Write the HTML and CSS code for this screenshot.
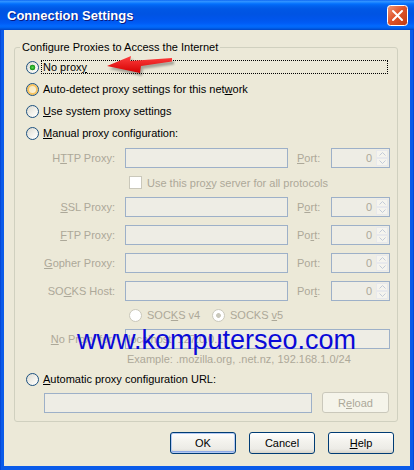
FILE: index.html
```html
<!DOCTYPE html>
<html>
<head>
<meta charset="utf-8">
<link rel="stylesheet" href="styles.css">
</head>
<body>
<div class="window">
  <div class="titlebar">
    <span class="title">Connection Settings</span>
    <svg class="close" width="21" height="21" viewBox="0 0 21 21">
      <defs>
        <linearGradient id="cg" x1="0" y1="0" x2="1" y2="1">
          <stop offset="0" stop-color="#F09A7A"/>
          <stop offset="0.45" stop-color="#E0552C"/>
          <stop offset="1" stop-color="#C0390E"/>
        </linearGradient>
      </defs>
      <rect x="0.5" y="0.5" width="20" height="20" rx="3" fill="url(#cg)" stroke="#FFFFFF"/>
      <path d="M6 6 L15 15 M15 6 L6 15" stroke="#FFFFFF" stroke-width="2" stroke-linecap="round"/>
    </svg>
  </div>
  <div class="client">
    <fieldset class="group">
      <legend>Configure Proxies to Access the Internet</legend>
      <div class="rrow"><span class="radio checked"></span><span class="lbl focus">No prox<u>y</u></span></div>
      <div class="rrow"><span class="radio hover"></span><span class="lbl">Auto-detect proxy settings for this net<u>w</u>ork</span></div>
      <div class="rrow"><span class="radio"></span><span class="lbl"><u>U</u>se system proxy settings</span></div>
      <div class="rrow"><span class="radio"></span><span class="lbl"><u>M</u>anual proxy configuration:</span></div>

      <div class="frow first"><span class="flabel">H<u>T</u>TP Proxy:</span><span class="input"></span><span class="plabel"><u>P</u>ort:</span><span class="spin"><span class="val">0</span><span class="arrows"><span class="ab"><svg width="7" height="4" viewBox="0 0 7 4"><path d="M0.5 3.5 L3.5 0.5 L6.5 3.5" fill="none" stroke="#C3CBD8"/></svg></span><span class="ab"><svg width="7" height="4" viewBox="0 0 7 4"><path d="M0.5 0.5 L3.5 3.5 L6.5 0.5" fill="none" stroke="#C3CBD8"/></svg></span></span></span></div>
      <div class="crow"><span class="check"></span><span class="dis">Use this pro<u>x</u>y server for all protocols</span></div>
      <div class="frow"><span class="flabel"><u>S</u>SL Proxy:</span><span class="input"></span><span class="plabel">P<u>o</u>rt:</span><span class="spin"><span class="val">0</span><span class="arrows"><span class="ab"><svg width="7" height="4" viewBox="0 0 7 4"><path d="M0.5 3.5 L3.5 0.5 L6.5 3.5" fill="none" stroke="#C3CBD8"/></svg></span><span class="ab"><svg width="7" height="4" viewBox="0 0 7 4"><path d="M0.5 0.5 L3.5 3.5 L6.5 0.5" fill="none" stroke="#C3CBD8"/></svg></span></span></span></div>
      <div class="frow gap"><span class="flabel"><u>F</u>TP Proxy:</span><span class="input"></span><span class="plabel">Po<u>r</u>t:</span><span class="spin"><span class="val">0</span><span class="arrows"><span class="ab"><svg width="7" height="4" viewBox="0 0 7 4"><path d="M0.5 3.5 L3.5 0.5 L6.5 3.5" fill="none" stroke="#C3CBD8"/></svg></span><span class="ab"><svg width="7" height="4" viewBox="0 0 7 4"><path d="M0.5 0.5 L3.5 3.5 L6.5 0.5" fill="none" stroke="#C3CBD8"/></svg></span></span></span></div>
      <div class="frow gap"><span class="flabel"><u>G</u>opher Proxy:</span><span class="input"></span><span class="plabel">Port:</span><span class="spin"><span class="val">0</span><span class="arrows"><span class="ab"><svg width="7" height="4" viewBox="0 0 7 4"><path d="M0.5 3.5 L3.5 0.5 L6.5 3.5" fill="none" stroke="#C3CBD8"/></svg></span><span class="ab"><svg width="7" height="4" viewBox="0 0 7 4"><path d="M0.5 0.5 L3.5 3.5 L6.5 0.5" fill="none" stroke="#C3CBD8"/></svg></span></span></span></div>
      <div class="frow gap"><span class="flabel">SO<u>C</u>KS Host:</span><span class="input"></span><span class="plabel">Por<u>t</u>:</span><span class="spin"><span class="val">0</span><span class="arrows"><span class="ab"><svg width="7" height="4" viewBox="0 0 7 4"><path d="M0.5 3.5 L3.5 0.5 L6.5 3.5" fill="none" stroke="#C3CBD8"/></svg></span><span class="ab"><svg width="7" height="4" viewBox="0 0 7 4"><path d="M0.5 0.5 L3.5 3.5 L6.5 0.5" fill="none" stroke="#C3CBD8"/></svg></span></span></span></div>
      <div class="srow">
        <span class="sopt first"><span class="radio dis"></span><span class="dis">SOC<u>K</u>S v4</span></span>
        <span class="sopt"><span class="radio dis dchecked"></span><span class="dis">SOCKS <u>v</u>5</span></span>
      </div>
      <div class="frow"><span class="flabel"><u>N</u>o Proxy for:</span><span class="input wide"><span class="ival">localhost, 127.0.0.1</span></span></div>
      <div class="erow dis">Example: .mozilla.org, .net.nz, 192.168.1.0/24</div>
      <div class="arow"><span class="radio"></span><span class="lbl"><u>A</u>utomatic proxy configuration URL:</span></div>
      <div class="urow"><span class="input url"></span><span class="btn disabled">R<u>e</u>load</span></div>
    </fieldset>
    <div class="buttons">
      <span class="btn default">OK</span>
      <span class="btn">Cancel</span>
      <span class="btn"><u>H</u>elp</span>
    </div>
  </div>
  <div class="watermark">www.komputerseo.com</div>
  <svg class="arrow" width="80" height="28" viewBox="0 0 80 28">
    <defs>
      <linearGradient id="ag" x1="0" y1="0" x2="0" y2="1">
        <stop offset="0" stop-color="#FF4040"/>
        <stop offset="1" stop-color="#D40000"/>
      </linearGradient>
      <filter id="blur" x="-20%" y="-50%" width="140%" height="200%"><feGaussianBlur stdDeviation="1.3"/></filter>
    </defs>
    <polygon points="9,17 33,7 32,12 74,9 74,12.5 43,17 42,24" fill="rgba(0,0,0,0.3)" filter="url(#blur)"/>
    <polygon points="7,14 31,4 30,9 72,6 72,9.5 41,14 40,21" fill="url(#ag)"/>
  </svg>
</div>
</body>
</html>
```
FILE: styles.css
```css
* { box-sizing: border-box; }
html, body { margin: 0; padding: 0; }
body {
  width: 414px;
  height: 470px;
  overflow: hidden;
  font-family: "Liberation Sans", Arial, sans-serif;
  font-size: 11px;
  color: #000;
}
.window {
  position: relative;
  width: 414px;
  height: 470px;
  display: flex;
  flex-direction: column;
  background: linear-gradient(to right, #0036C6 0, #0A5BE9 1px, #0A5BE9 calc(100% - 1px), #0036C6 100%);
}
.titlebar {
  height: 30px;
  flex: none;
  display: flex;
  align-items: center;
  justify-content: space-between;
  padding: 0 6px 0 7px;
  background: linear-gradient(to bottom,
    #0058EE 0px, #3593FF 1px, #288EFF 2px, #127DFF 3px, #036FFC 4px,
    #0262EE 6px, #0057E5 9px, #0054E3 14px, #0055EB 19px, #005BF5 23px,
    #026AFE 26px, #0062EF 28px, #0052D6 29px, #0046C8 30px);
}
.title {
  color: #FFFFFF;
  font-weight: bold;
  font-size: 13px;
  text-shadow: 1px 1px 0 #0A1A80;
  padding-top: 1px;
}
.close { flex: none; margin-top: 1px; }
.client {
  flex: 1;
  margin: 0 4px 4px;
  background: #ECE9D8;
  display: flex;
  flex-direction: column;
}
.group {
  margin: 11px 12px 0 10px;
  padding: 2px 6px 8px 11px;
  border: 1px solid #D0D0BF;
  border-radius: 3px;
  min-width: 0;
}
.group legend {
  padding: 0 2px;
  margin-left: -6px;
  line-height: 13px;
}
.rrow, .arow {
  display: flex;
  align-items: center;
  height: 22px;
}
.arow { height: 20px; }
.radio {
  flex: none;
  width: 13px;
  height: 13px;
  border-radius: 50%;
  border: 1px solid #1C5180;
  background: linear-gradient(135deg, #DCDAD0 0%, #F4F3EE 60%, #FFFFFF 100%);
}
.radio.checked {
  background: radial-gradient(circle at 50% 50%, #5BDA55 0, #21A121 2px, #1D9A1D 2.6px, rgba(0,0,0,0) 3.1px),
              linear-gradient(135deg, #DCDAD0 0%, #F4F3EE 60%, #FFFFFF 100%);
}
.radio.hover {
  box-shadow: inset 0 0 0 2px #F7C35F;
  background: linear-gradient(135deg, #F4E2B2 0%, #FCF6E4 100%);
}
.radio.dis {
  border-color: #CAC8BB;
  background: #FFFFFF;
}
.radio.dis.dchecked {
  background: radial-gradient(circle at 50% 50%, #CAC8BB 0, #CAC8BB 2px, rgba(0,0,0,0) 2.8px), #FFFFFF;
}
.lbl {
  margin-left: 2px;
  padding-left: 2px;
  line-height: 14px;
  white-space: nowrap;
}
.lbl.focus {
  flex: 1;
  margin-right: 3px;
  border: 1px dotted #000;
  padding-left: 1px;
  line-height: 12px;
}
.dis, .flabel, .plabel { color: #ACA899; }
.frow {
  display: flex;
  align-items: center;
  height: 20px;
}
.frow.first { margin-top: 4px; }
.frow.gap { margin-top: 8px; }
.flabel {
  flex: none;
  width: 89px;
  margin-right: 10px;
  text-align: right;
  white-space: nowrap;
}
.input {
  flex: none;
  width: 163px;
  height: 20px;
  border: 1px solid #9DB0C8;
  background: #EEEDE5;
  display: flex;
  align-items: center;
}
.input.wide { width: 265px; }
.ival { color: #ACA899; padding-left: 2px; }
.plabel {
  flex: none;
  width: 34px;
  margin-left: 9px;
}
.spin {
  flex: none;
  width: 59px;
  height: 20px;
  border: 1px solid #9DB0C8;
  background: #EEEDE5;
  display: flex;
}
.spin .val {
  flex: 1;
  text-align: right;
  padding-right: 4px;
  color: #ACA899;
  line-height: 18px;
}
.arrows {
  flex: none;
  width: 13px;
  display: flex;
  flex-direction: column;
  padding: 1px 1px 1px 0;
}
.ab {
  flex: 1;
  display: flex;
  align-items: center;
  justify-content: center;
  background: #F5F4EE;
  border: 1px solid #E8E9EC;
}
.ab svg { display: block; }
.crow {
  display: flex;
  align-items: center;
  height: 29px;
  padding-left: 103px;
}
.check {
  flex: none;
  width: 13px;
  height: 13px;
  border: 1px solid #CAC8BB;
  background: #FFFFFF;
  margin-right: 5px;
}
.srow {
  display: flex;
  align-items: center;
  height: 28px;
  padding-left: 103px;
}
.sopt {
  display: flex;
  align-items: center;
  gap: 5px;
}
.sopt.first { width: 83px; }
.erow {
  height: 20px;
  line-height: 20px;
  padding-left: 101px;
}
.urow {
  display: flex;
  align-items: center;
  margin-top: 4px;
  height: 20px;
  padding-left: 18px;
}
.input.url { width: 268px; }
.btn {
  flex: none;
  display: flex;
  align-items: center;
  justify-content: center;
  width: 66px;
  height: 22px;
  border: 1px solid #003C74;
  border-radius: 3px;
  background: linear-gradient(to bottom, #FFFFFF 0%, #F4F3EE 40%, #ECEBE6 80%, #D8D4C9 100%);
}
.btn.default {
  box-shadow: inset 0 0 0 1px #B5CAF3, inset 0 -1px 0 1px #8EA9E6;
}
.btn.disabled {
  width: 67px;
  height: 21px;
  margin-left: 10px;
  margin-top: -1px;
  border-color: #CAC8BB;
  background: #F5F4EA;
  color: #ACA899;
}
.buttons {
  display: flex;
  justify-content: flex-end;
  gap: 13px;
  margin-top: 10px;
  padding-right: 16px;
}
.watermark {
  position: absolute;
  left: 77px;
  top: 327px;
  font-family: "Liberation Sans", Arial, sans-serif;
  font-size: 27px;
  line-height: 27px;
  color: #0A0AD8;
  white-space: nowrap;
}
.arrow {
  position: absolute;
  left: 100px;
  top: 52px;
}
```
